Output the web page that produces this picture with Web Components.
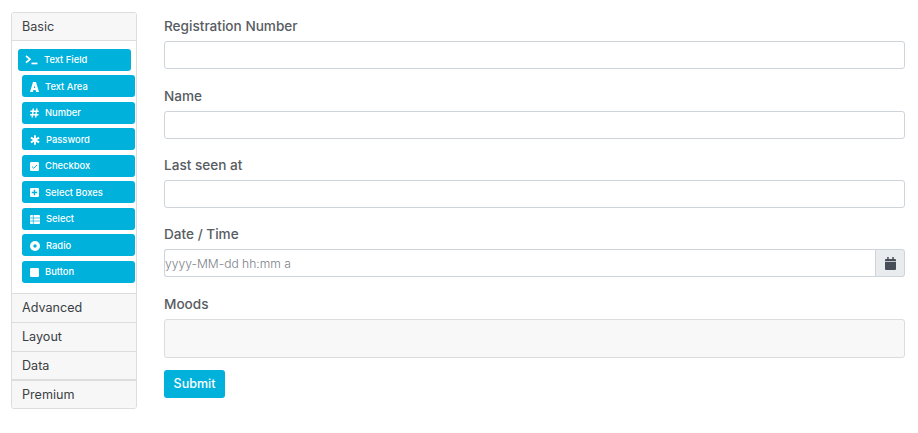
<!DOCTYPE html>
<html>
<head>
<meta charset="utf-8">
<style>
  html, body { margin: 0; background: #fff; font-family: Inter, "Open Sans", sans-serif; }
</style>
</head>
<body>
<builder-page>
  <builder-sidebar slot="side">
    <side-header first>Basic</side-header>
    <div class="list" style="padding:7.6px 1px 10.2px 10px;display:flex;flex-direction:column;gap:4.55px">
      <palette-btn icon="terminal" gap="26" shift>Text Field</palette-btn>
      <palette-btn icon="font">Text Area</palette-btn>
      <palette-btn icon="hash">Number</palette-btn>
      <palette-btn icon="asterisk" gap="24">Password</palette-btn>
      <palette-btn icon="check">Checkbox</palette-btn>
      <palette-btn icon="plus">Select Boxes</palette-btn>
      <palette-btn icon="table" gap="24">Select</palette-btn>
      <palette-btn icon="dot" gap="24">Radio</palette-btn>
      <palette-btn icon="stop">Button</palette-btn>
    </div>
    <side-header>Advanced</side-header>
    <side-header>Layout</side-header>
    <side-header>Data</side-header>
    <side-header thick>Premium</side-header>
  </builder-sidebar>
  <div slot="main" style="padding-top:.4px">
    <form-field label="Registration Number"><text-box></text-box></form-field>
    <form-field label="Name"><text-box></text-box></form-field>
    <form-field label="Last seen at"><text-box></text-box></form-field>
    <form-field label="Date / Time"><date-box placeholder="yyyy-MM-dd hh:mm a"></date-box></form-field>
    <form-field label="Moods"><moods-box></moods-box></form-field>
    <submit-btn>Submit</submit-btn>
  </div>
</builder-page>

<script>
// 页面外框
class BuilderPage extends HTMLElement {
  constructor() {
    super();
    this.attachShadow({ mode: 'open' });
    this.shadowRoot.innerHTML = `
      <style>
        :host { display: grid; grid-template-columns: 126px 741px; column-gap: 27px; padding: 12px 0 0 11px; align-items: start; }
      </style>
      <slot name="side"></slot>
      <slot name="main"></slot>`;
  }
}

class BuilderSidebar extends HTMLElement {
  constructor() {
    super();
    this.attachShadow({ mode: 'open' });
    this.shadowRoot.innerHTML = `
      <style>
        :host { display: block; box-sizing: border-box; height: 397px; border: 1px solid #ddd; border-radius: 3px; overflow: hidden; background: #fff; }
      </style>
      <slot></slot>`;
  }
}

class SideHeader extends HTMLElement {
  constructor() {
    super();
    this.attachShadow({ mode: 'open' });
    this.shadowRoot.innerHTML = `
      <style>
        :host { display: block; box-sizing: border-box; height: 29px; padding: 0 10px; background: #f7f7f7; border-top: 1px solid #ddd; font-size: 12.6px; line-height: 27px; color: #3a3f45; }
        :host([first]) { border-top: 0; border-bottom: 1px solid #ddd; height: 28px; }
        :host([thick]) { border-top-width: 2px; margin-top: -1px; height: 30px; }
      </style>
      <slot></slot>`;
  }
}

// 按钮图标
const ICONS = {
  terminal: '<svg width="13" height="10" viewBox="0 0 13 10"><path d="M1 1l4 3.2L1 7.6" fill="none" stroke="#fff" stroke-width="1.7"/><rect x="6.5" y="7.6" width="6" height="1.7" fill="#fff"/></svg>',
  font: '<svg width="9" height="10" viewBox="0 0 9 10"><path fill="#fff" fill-rule="evenodd" d="M3 0h3l3 10H6.1l-.5-1.9H3.4L2.9 10H0zM4.5 3.2L3.9 6h1.2z"/></svg>',
  hash: '<svg width="9" height="10" viewBox="0 0 9 10"><path d="M3.3.5L2.2 9.5M6.8.5L5.7 9.5M.3 3.2h8.4M.1 6.8h8.4" fill="none" stroke="#fff" stroke-width="1.5"/></svg>',
  asterisk: '<svg width="10" height="10" viewBox="0 0 10 10"><path d="M5 .3v9.4M.9 2.6l8.2 4.8M.9 7.4l8.2-4.8" fill="none" stroke="#fff" stroke-width="1.9"/></svg>',
  check: '<svg width="9" height="9" viewBox="0 0 9 9"><rect width="9" height="9" rx="1.2" fill="#fff"/><path d="M2 4.6l1.8 1.7L7 3" fill="none" stroke="#00b1dc" stroke-width="1"/></svg>',
  plus: '<svg width="9" height="9" viewBox="0 0 9 9"><rect width="9" height="9" rx="1.2" fill="#fff"/><path d="M4.5 1.8v5.4M1.8 4.5h5.4" fill="none" stroke="#00b1dc" stroke-width="1.4"/></svg>',
  table: '<svg width="10" height="9" viewBox="0 0 10 9"><rect width="10" height="9" rx="1" fill="#fff"/><path d="M3.3 0v9M0 3h10M0 6h10" stroke="#00b1dc" stroke-width=".7"/></svg>',
  dot: '<svg width="10" height="10" viewBox="0 0 10 10"><circle cx="5" cy="5" r="5" fill="#fff"/><circle cx="5" cy="5" r="1.7" fill="#00b1dc"/></svg>',
  stop: '<svg width="9" height="9" viewBox="0 0 9 9"><rect width="9" height="9" rx="1.2" fill="#fff"/></svg>'
};

class PaletteBtn extends HTMLElement {
  constructor() {
    super();
    this.attachShadow({ mode: 'open' });
    const icon = ICONS[this.getAttribute('icon')] || '';
    const gap = this.getAttribute('gap') || '23';
    this.shadowRoot.innerHTML = `
      <style>
        :host { display: block; box-sizing: border-box; width: 113px; height: 22px; background: #00b1dc; border-radius: 3px; color: #fff; font-size: 9.4px; font-weight: 500; line-height: 22px; }
        :host([shift]) { transform: translateX(-4px); }
        .row { display: flex; align-items: center; box-sizing: border-box; height: 100%; padding-top: .8px; }
        .ic { flex: none; display: flex; box-sizing: border-box; padding-left: 8px; }
        :host([shift]) .ic { padding-left: 7px; }
      </style>
      <div class="row"><span class="ic" style="width:${gap}px">${icon}</span><slot></slot></div>`;
  }
}

class FormField extends HTMLElement {
  constructor() {
    super();
    this.attachShadow({ mode: 'open' });
    this.shadowRoot.innerHTML = `
      <style>
        :host { display: block; margin-bottom: 12.33px; }
        label { display: block; height: 29px; padding-top: 4px; box-sizing: border-box; font-size: 13.6px; font-weight: 500; line-height: 21px; color: #575c62; }
      </style>
      <label>${this.getAttribute('label')}</label>
      <slot></slot>`;
  }
}

class TextBox extends HTMLElement {
  constructor() {
    super();
    this.attachShadow({ mode: 'open' });
    this.shadowRoot.innerHTML = `
      <style>
        :host { display: block; }
        input { display: block; box-sizing: border-box; width: 100%; height: 28px; margin: 0; border: 1px solid #ced4da; border-radius: 3px; background: #fff; outline: 0; }
      </style>
      <input type="text">`;
  }
}

class DateBox extends HTMLElement {
  constructor() {
    super();
    this.attachShadow({ mode: 'open' });
    this.shadowRoot.innerHTML = `
      <style>
        :host { display: flex; height: 28px; }
        input { flex: 1; min-width: 0; box-sizing: border-box; height: 28px; margin: 0; padding: 0; border: 1px solid #ced4da; border-right: 0; border-radius: 3px 0 0 3px; outline: 0; font: 300 12.1px Inter, sans-serif; }
        input::placeholder { color: #7d8288; opacity: 1; }
        .append { flex: none; box-sizing: border-box; width: 30px; display: flex; align-items: center; justify-content: center; background: #e9ecef; border: 1px solid #ced4da; border-radius: 0 3px 3px 0; }
      </style>
      <input type="text" placeholder="${this.getAttribute('placeholder')}">
      <div class="append">
        <svg width="11" height="13" viewBox="0 0 11 13"><path fill="#474e57" d="M2.2 0h1.5v2H7.3V0h1.5v2H10a1 1 0 0 1 1 1v1.3H0V3a1 1 0 0 1 1-1h1.2zM0 5h11v7a1 1 0 0 1-1 1H1a1 1 0 0 1-1-1z"/></svg>
      </div>`;
  }
}

class MoodsBox extends HTMLElement {
  constructor() {
    super();
    this.attachShadow({ mode: 'open' });
    this.shadowRoot.innerHTML = `
      <style>
        :host { display: block; box-sizing: border-box; height: 39px; background: #f8f8f8; border: 1px solid #dcdcdc; border-radius: 3px; }
      </style>`;
  }
}

class SubmitBtn extends HTMLElement {
  constructor() {
    super();
    this.attachShadow({ mode: 'open' });
    this.shadowRoot.innerHTML = `
      <style>
        :host { display: inline-block; box-sizing: border-box; width: 61px; height: 28px; background: #00b1dc; border-radius: 3px; color: #fff; font-size: 12.5px; font-weight: 500; line-height: 27px; text-align: center; }
      </style>
      <slot></slot>`;
  }
}

customElements.define('builder-page', BuilderPage);
customElements.define('builder-sidebar', BuilderSidebar);
customElements.define('side-header', SideHeader);
customElements.define('palette-btn', PaletteBtn);
customElements.define('form-field', FormField);
customElements.define('text-box', TextBox);
customElements.define('date-box', DateBox);
customElements.define('moods-box', MoodsBox);
customElements.define('submit-btn', SubmitBtn);
</script>
</body>
</html>
